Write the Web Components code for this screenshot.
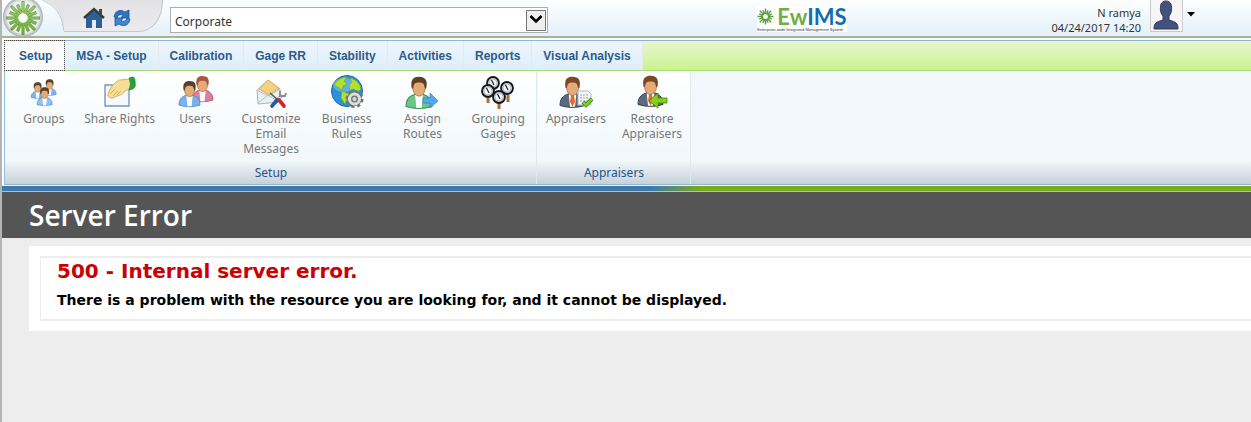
<!DOCTYPE html>
<html lang="en">
<head>
<meta charset="utf-8">
<title>EwIMS</title>
<style>
    html { height: 100%; }
    body {
        margin: 0;
        min-height: 100%;
        background: #ededed;
        box-sizing: border-box;
        border-left: 2px solid #b4b4b4;
        --ui-font: "Noto Sans", "Open Sans", sans-serif;
    }
</style>
</head>
<body>
<app-header user="N ramya" date="04/24/2017 14:20"></app-header>

<ribbon-bar>
    <ribbon-tab slot="tabs" active>Setup</ribbon-tab>
    <ribbon-tab slot="tabs">MSA - Setup</ribbon-tab>
    <ribbon-tab slot="tabs">Calibration</ribbon-tab>
    <ribbon-tab slot="tabs">Gage RR</ribbon-tab>
    <ribbon-tab slot="tabs">Stability</ribbon-tab>
    <ribbon-tab slot="tabs">Activities</ribbon-tab>
    <ribbon-tab slot="tabs">Reports</ribbon-tab>
    <ribbon-tab slot="tabs">Visual Analysis</ribbon-tab>

    <ribbon-group label="Setup" style="--w: 530px">
        <ribbon-item icon="groups">Groups</ribbon-item>
        <ribbon-item icon="share">Share Rights</ribbon-item>
        <ribbon-item icon="users">Users</ribbon-item>
        <ribbon-item icon="email">Customize Email Messages</ribbon-item>
        <ribbon-item icon="rules">Business Rules</ribbon-item>
        <ribbon-item icon="routes">Assign Routes</ribbon-item>
        <ribbon-item icon="gages">Grouping Gages</ribbon-item>
    </ribbon-group>
    <ribbon-group label="Appraisers" style="--w: 152px">
        <ribbon-item icon="appraisers">Appraisers</ribbon-item>
        <ribbon-item icon="restore">Restore Appraisers</ribbon-item>
    </ribbon-group>
</ribbon-bar>

<server-error>
    <span slot="title">Server Error</span>
    <span slot="code">500 - Internal server error.</span>
    <span slot="message">There is a problem with the resource you are looking for, and it cannot be displayed.</span>
</server-error>

<script>
/* head + shoulders, reused by most of the ribbon icons */
function person(x, y, s, shirt, edge, hair, tie) {
    return `<g transform="translate(${x} ${y}) scale(${s})">
        <path d="M0 22 C0 15 4 13 10 12 C16 13 20 15 20 22 Q10 25 0 22Z" fill="${shirt}" stroke="${edge}" stroke-width=".8"/>
        <path d="M7 13 L8 23 H12 L13 13Z" fill="#fff"/>
        ${tie ? `<path d="M9 13h2l1 6-2 4-2-4z" fill="${tie}"/>` : ''}
        <ellipse cx="10" cy="7.500" rx="4.800" ry="6.500" fill="#e3ab77" stroke="#a86f43" stroke-width=".6"/>
        <path d="M4.500 8 C3 1 6 -1 10 -1 C15 -1 17 2 15.500 8 L14.500 8 C14 4 13 3.500 10 3.500 C7 3.500 6 4 5.500 8Z" fill="${hair}"/>
    </g>`;
}

function dial(x, y) {
    return `<g transform="translate(${x} ${y})">
        <circle r="6" fill="#cdd4e0" stroke="#161616" stroke-width="1.8"/>
        <circle r="4" fill="#f5f7fa" stroke="#8d97a5" stroke-width=".6"/>
        <path d="M-1.500 -3 L1 2" stroke="#222" stroke-width="1.2"/>
    </g>`;
}

function burst(cx, cy, r, color, width) {
    let lines = '';
    for (let i = 0; i < 16; i++) {
        const a = i * Math.PI / 8;
        const k = i % 2 ? 0.85 : 1;
        lines += `M${(cx + r * 0.3 * Math.cos(a)).toFixed(1)} ${(cy + r * 0.3 * Math.sin(a)).toFixed(1)}L${(cx + r * k * Math.cos(a)).toFixed(1)} ${(cy + r * k * Math.sin(a)).toFixed(1)}`;
    }
    return `<path d="${lines}" stroke="${color}" stroke-width="${width}" fill="none"/>`;
}

const ICONS = {
    groups: person(15, 4, .66, '#79b2ee', '#4c86c8', '#57402e') +
        person(3, 7, .66, '#79b2ee', '#4c86c8', '#57402e') +
        person(9, 12, .76, '#8fc1f4', '#4c86c8', '#57402e'),
    share: `<path d="M1 9h24v21H1z" fill="#f4f8ff" stroke="#7d93bd" stroke-width="1.4"/>
        <path d="M4 18 C6 11 11 6 15 4 L27 3 V12 L21 15 C18 20 14 19 11 21 C8 23 3 22 4 18Z" fill="#f7dc93" stroke="#cfa452" stroke-width=".8"/>
        <path d="M6 18l5-5M9 20l5-5M13 19l4-4" stroke="#d9b163" fill="none"/>
        <path d="M25 2 C29 0 31 1 31 5 C32 11 31 13 25 14 Q28 8 25 2Z" fill="#22a637" stroke="#10781f" stroke-width=".6"/>`,
    users: person(13, 1, 1.05, '#e07f98', '#b84f69', '#a9573c') +
        person(0, 6, 1.05, '#79b2ee', '#4c86c8', '#57402e'),
    email: `<path d="M2 14 L13 4 L25 13 V26 L3 28Z" fill="#e9f1ee" stroke="#a5bab6"/>
        <path d="M4 13 L13 4 L24 12 L14 19Z" fill="#f5d083" stroke="#dcb163"/>
        <path d="M2 14 L13 20 L25 13 M3 27 L13 19 L24 26" fill="none" stroke="#b2c4c0"/>
        <path d="M27 19 L20 27" stroke="#778" stroke-width="3.4"/><path d="M27 19 L20 27" stroke="#eeeef2" stroke-width="2"/>
        <path d="M25 15 L25 20 L30 20 L31 17" fill="none" stroke="#8b8e99" stroke-width="2"/>
        <path d="M22 24 L17 30" stroke="#1e59b9" stroke-width="3.600" stroke-linecap="round"/>
        <path d="M15 17 L23 24" stroke="#555" stroke-width="1.6"/>
        <path d="M24 24 L29 30" stroke="#d8202a" stroke-width="3.600" stroke-linecap="round"/>`,
    rules: `<circle cx="16" cy="15" r="15.500" fill="#2d91d8" stroke="#1b69a9"/>
        <ellipse cx="13" cy="9" rx="11" ry="7" fill="#8bd2f4" opacity=".5"/>
        <path d="M3 9 Q8 1 16 1 L13 5 L16 8 L12 10 L11 14 L7 11Z M19 2 Q28 4 30 13 L26 17 L23 13 L19 14 L18 9 L21 6Z M11 15 L18 18 L16 23 L14 28 L10 22Z" fill="#b4df2c" stroke="#75ad18" stroke-width=".6"/>
        <g transform="translate(23.5 23)"><circle r="7.500" fill="none" stroke="#6f7377" stroke-width="3" stroke-dasharray="3.1 2.79"/>
        <circle r="5" fill="none" stroke="#777" stroke-width="4.400"/><circle r="5" fill="none" stroke="#dcdee0" stroke-width="3"/><circle r="2.6" fill="#cde0b8" stroke="#666" stroke-width=".8"/></g>`,
    routes: person(0, 2, 1.3, '#6fc487', '#368f50', '#5f4023') +
        `<path d="M17 22h7v-5l8 8-8 7v-5h-7z" fill="#53a8ec" stroke="#2877bd" stroke-width=".6"/>`,
    gages: `<path d="M6 22v5M17 27v6M26 19v7" stroke="#a5723d" stroke-width="3"/>` +
        dial(11, 7) + dial(25, 12) + dial(6, 15) + dial(17, 21),
    appraisers: person(0, 2, 1.25, '#5c6c80', '#344357', '#7c4826', '#ec6528') +
        `<path d="M18 15h10l3 3v11H18z" fill="#f3f4f7" stroke="#b4b8c0"/>
        <path d="M20 19h8M20 22h8M20 25h8" stroke="#a3a9b5" stroke-dasharray="2 1"/>
        <path d="M23 26l3 3 6-6" fill="none" stroke="#3d8d13" stroke-width="4"/><path d="M23 26l3 3 6-6" fill="none" stroke="#7ed030" stroke-width="2.4"/>`,
    restore: person(2, 1, 1.25, '#5c6c80', '#344357', '#7c4826', '#ec6528') +
        `<path d="M31 22h-9v-5l-9 8 9 7v-5h9z" fill="#87ce20" stroke="#45860c" stroke-width=".8"/>`
};

const headerTemplate = document.createElement('template');
headerTemplate.innerHTML = `
<style>
    :host {
        display: flex;
        align-items: flex-start;
        height: 36px;
        background: linear-gradient(#fdfeff, #e2f1fa);
        border-bottom: 2px solid #abb08f;
        font: 12px/14px var(--ui-font);
        color: #333;
    }
    svg { display: block; }
    button {
        padding: 0;
        border: 0;
        background: none;
        cursor: pointer;
    }
    .orb { flex-shrink: 0; }
    .quick {
        display: flex;
        gap: 8px;
        box-sizing: border-box;
        width: 99px;
        height: 32px;
        padding: 6px 0 0 19px;
        background: linear-gradient(#e2e2e5, #ececef);
        border: solid #c6c8cc;
        border-width: 0 1px 1px 0;
        border-radius: 0 0 24px 0 / 0 0 30px 0;
    }
    .quick button { height: 24px; }
    .site {
        position: relative;
        flex: 0 1 378px;
        box-sizing: border-box;
        height: 26px;
        margin: 7px 0 0 7px;
        border: 1px solid #adadad;
        background: #fff;
    }
    .site select {
        appearance: none;
        width: 100%;
        height: 24px;
        padding: 3px 24px 0 4px;
        border: 0;
        background: transparent;
        font: 12px/16px var(--ui-font);
        color: #333;
    }
    .site svg {
        position: absolute;
        right: 1px;
        top: 2px;
        pointer-events: none;
    }
    .brand {
        flex-shrink: 0;
        display: grid;
        grid-template-columns: 17px auto;
        grid-template-rows: 21px 5px;
        column-gap: 3px;
        justify-content: center;
        align-items: center;
        width: 90px;
        margin: 6px 0 0 209px;
        background: #fff;
    }
    .brand b {
        font: bold 22px/21px Lato, sans-serif;
        color: #0f6db5;
    }
    .brand b span { color: #6fae43; }
    .brand small {
        grid-column: 1 / 3;
        font: 4px/5px "Liberation Sans", sans-serif;
        color: #333;
        white-space: nowrap;
    }
    .user {
        margin: 5px 9px 0 auto;
        font-size: 11px;
        line-height: 15px;
        text-align: right;
        white-space: nowrap;
    }
    .avatar {
        display: flex;
        align-items: center;
        gap: 3px;
        height: 32px;
        margin-right: 56px;
    }
    .avatar .arrow { margin-bottom: 4px; }
</style>
<svg class="orb" width="62" height="36" viewBox="0 0 62 36">
    <defs>
        <radialGradient id="ball"><stop offset="0" stop-color="#fff"/><stop offset=".8" stop-color="#e9edef"/><stop offset="1" stop-color="#a5afb5"/></radialGradient>
        <linearGradient id="leaf" x1="0" y1="0" x2="0" y2="36" gradientUnits="userSpaceOnUse"><stop offset="0" stop-color="#a3cf74"/><stop offset="1" stop-color="#62ad2c"/></linearGradient>
    </defs>
    <path d="M42 0 H62 V31 Q61 8 42 0Z" fill="#e3e3e6"/>
    <path d="M40 0 Q60 7 62 31" fill="none" stroke="#c6c8cc"/>
    <circle cx="21" cy="17" r="20" fill="url(#ball)"/>
    ${burst(21, 18, 17, '#6f9653', 3)}
    ${burst(21, 18, 16, 'url(#leaf)', 2.2)}
</svg>
<div class="quick">
    <button type="button" aria-label="Home">
        <svg width="22" height="24" viewBox="0 0 22 24">
            <path d="M3 11 L11 4 L19 11 V22 H13 V14 H9 V22 H3Z" fill="#2a6298"/>
            <path d="M16 3h3v6l-3-3z" fill="#444"/>
            <path d="M1 12 L11 3 L21 12" fill="none" stroke="#3a3a3a" stroke-width="2.4"/>
        </svg>
    </button>
    <button type="button" aria-label="Refresh">
        <svg width="18" height="24" viewBox="0 0 18 24">
            <path d="M1 11 C2 4 8 3 12 6 L16 4 V12 H8 L10 9 C7 8 5 9 4 12Z" fill="#2f74c4" stroke="#1b54a0" stroke-width=".8"/>
            <path d="M17 13 C16 20 10 21 6 18 L2 20 V12 H10 L8 15 C11 16 13 15 14 12Z" fill="#3f86d4" stroke="#1b54a0" stroke-width=".8"/>
        </svg>
    </button>
</div>
<div class="site">
    <select aria-label="Site"><option>Corporate</option></select>
    <svg width="20" height="21" viewBox="0 0 20 21">
        <path d="M.5 .5h19v20h-19z" fill="#efefef" stroke="#777"/>
        <path d="M4.5 6 L10 11.500 L15.500 6" fill="none" stroke="#000" stroke-width="2.600"/>
    </svg>
</div>
<div class="brand">
    <svg width="17" height="17" viewBox="0 0 17 17">${burst(8.5, 8.5, 8, '#5b9e3d', 1.4)}</svg>
    <b><span>Ew</span>IMS</b>
    <small>Enterprise-wide Integrated Management System</small>
</div>
<div class="user"><div id="name"></div><div id="date"></div></div>
<button class="avatar" type="button" aria-label="Account">
    <svg width="34" height="32" viewBox="0 0 34 32">
        <path d="M.5 -1h32v32.500h-32z" fill="#f6f6f6" stroke="#c9c9c9"/>
        <path d="M4 29 C4 23 6 22 13 20 V16 C10 13 10 8 11 4 C13 0 19 0 21 4 C22 8 22 13 19 16 V20 C26 22 28 23 28 29Z" fill="#43517c" stroke="#303c60"/>
    </svg>
    <svg class="arrow" width="8" height="5" viewBox="0 0 8 5"><path d="M0 0h8L4 4.500z" fill="#000"/></svg>
</button>
`;

class AppHeader extends HTMLElement {
    constructor() {
        super();
        this.attachShadow({ mode: 'open' }).appendChild(headerTemplate.content.cloneNode(true));
    }

    connectedCallback() {
        this.shadowRoot.getElementById('name').textContent = this.getAttribute('user');
        this.shadowRoot.getElementById('date').textContent = this.getAttribute('date');
    }
}

class RibbonBar extends HTMLElement {
    constructor() {
        super();
        this.attachShadow({ mode: 'open' }).innerHTML = `
        <style>
            :host { display: block; padding-top: 2px; background: #fff; }
            nav {
                display: flex;
                height: 29px;
                margin-left: 2px;
                padding-left: 1px;
                border-top: 1px solid #8db6d2;
                border-bottom: 1px solid #a9dc74;
                background: linear-gradient(#e6f9cf, #caf18f);
            }
            .body {
                display: flex;
                gap: 1px;
                height: 113px;
                margin-left: 2px;
                padding-left: 1px;
                border-left: 1px solid #8fbfe4;
                border-bottom: 1px solid #94b7d0;
                background: linear-gradient(#f0f8fc 91px, #eef5f7 91px, #c6d2d8);
            }
            .rule {
                height: 5px;
                border-top: 1px solid #edf4f8;
                border-bottom: 1px solid #9cc3e2;
                background: linear-gradient(90deg, #3f79ac 52%, #7aab1a 56%);
            }
        </style>
        <nav><slot name="tabs"></slot></nav>
        <div class="body"><slot></slot></div>
        <div class="rule"></div>`;
    }
}

class RibbonTab extends HTMLElement {
    constructor() {
        super();
        this.attachShadow({ mode: 'open' }).innerHTML = `
        <style>
            :host { display: flex; border-right: 1px solid #e8e8e8; }
            button {
                padding: 0 11px;
                border: 0;
                background: linear-gradient(#edf6fc, #ddeefa);
                font: bold 12px/28px "Liberation Sans", Arial, sans-serif;
                color: #2b5a8b;
                white-space: nowrap;
                cursor: pointer;
            }
            :host([active]) button {
                padding: 0 12px 0 14px;
                background: #fbfbfb;
                outline: 1px dotted #444;
            }
        </style>
        <button type="button"><slot></slot></button>`;
    }
}

class RibbonGroup extends HTMLElement {
    constructor() {
        super();
        this.attachShadow({ mode: 'open' }).innerHTML = `
        <style>
            :host {
                display: flex;
                flex-direction: column;
                width: var(--w);
                border-right: 1px solid #dcebe8;
            }
            .items {
                display: flex;
                height: 91px;
                background: linear-gradient(#fff, #f0f8fb);
            }
            .label {
                font: 12px/22px var(--ui-font);
                color: #22558f;
                text-align: center;
            }
        </style>
        <div class="items"><slot></slot></div>
        <div class="label"></div>`;
    }

    connectedCallback() {
        this.shadowRoot.querySelector('.label').textContent = this.getAttribute('label');
    }
}

class RibbonItem extends HTMLElement {
    constructor() {
        super();
        this.attachShadow({ mode: 'open' }).innerHTML = `
        <style>
            :host { display: flex; flex: 1 1 0; min-width: 0; }
            button {
                display: flex;
                flex-direction: column;
                align-items: center;
                gap: 3px;
                width: 100%;
                padding: 5px 0 0;
                border: 0;
                background: none;
                font: 12px/15px var(--ui-font);
                color: #777;
                cursor: pointer;
            }
            svg { flex-shrink: 0; overflow: visible; }
        </style>
        <button type="button">
            <svg width="32" height="32" viewBox="0 0 32 32"></svg>
            <span><slot></slot></span>
        </button>`;
    }

    connectedCallback() {
        this.shadowRoot.querySelector('svg').innerHTML = ICONS[this.getAttribute('icon')];
    }
}

class ServerError extends HTMLElement {
    constructor() {
        super();
        this.attachShadow({ mode: 'open' }).innerHTML = `
        <style>
            :host { display: block; font-family: "DejaVu Sans", Verdana, sans-serif; }
            h1 {
                margin: 0;
                padding-left: 27px;
                background: #555;
                font: 600 28px/46px "Open Sans", sans-serif;
                color: #fff;
            }
            .content {
                margin: 8px 0 0 27px;
                padding: 10px 0 10px 11px;
                background: #fff;
            }
            fieldset {
                margin: 0;
                padding: 1px 0 10px 16px;
                border: solid #ededed;
                border-width: 2px 0 2px 1px;
            }
            h2 { margin: 0; font-size: 20px; line-height: 24px; color: #c00; }
            h3 { margin: 8px 0 0; font-size: 14px; line-height: 18px; color: #000; }
        </style>
        <h1><slot name="title"></slot></h1>
        <div class="content">
            <fieldset>
                <h2><slot name="code"></slot></h2>
                <h3><slot name="message"></slot></h3>
            </fieldset>
        </div>`;
    }
}

customElements.define('app-header', AppHeader);
customElements.define('ribbon-bar', RibbonBar);
customElements.define('ribbon-tab', RibbonTab);
customElements.define('ribbon-group', RibbonGroup);
customElements.define('ribbon-item', RibbonItem);
customElements.define('server-error', ServerError);
</script>
</body>
</html>
